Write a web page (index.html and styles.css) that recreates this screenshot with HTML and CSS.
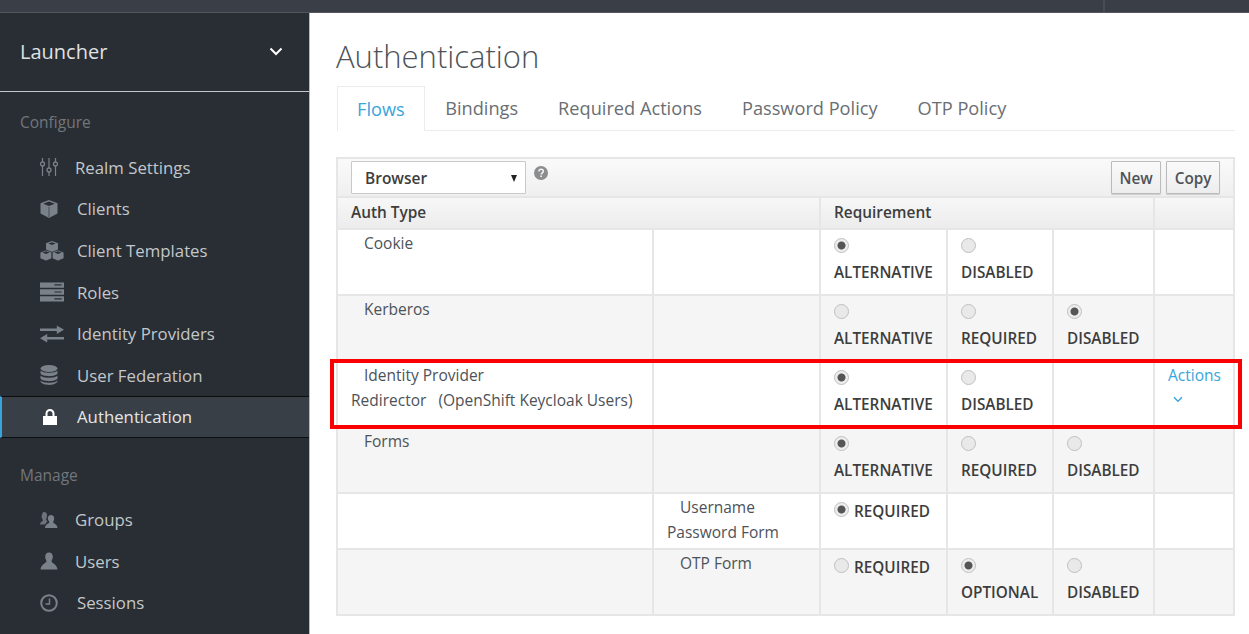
FILE: index.html
```html
<!DOCTYPE html>
<html lang="en">
<head>
    <meta charset="UTF-8">
    <title>Authentication</title>
    <link rel="stylesheet" href="styles.css">
</head>
<body>
<div id="topbar"><span class="divider"></span></div>
<div id="page">
    <div id="sidebar">
        <div id="realm">
            <span>Launcher</span>
            <svg width="14" height="9" viewBox="0 0 14 9"><path d="M1.5 1.5L7 7l5.5-5.5" fill="none" stroke="#fff" stroke-width="2"/></svg>
        </div>
        <h4 class="nav-title">Configure</h4>
        <ul class="nav-list">
            <li class="narrow">
                <svg class="icon" viewBox="0 0 18 18"><path d="M2.500 0v18M9 0v18M15.500 0v18" stroke="#7b8189" stroke-width="1.200" fill="none"/><circle cx="2.500" cy="6" r="2" fill="#292e34" stroke="#7b8189" stroke-width="1.300"/><circle cx="9" cy="12" r="2" fill="#292e34" stroke="#7b8189" stroke-width="1.300"/><circle cx="15.500" cy="6" r="2" fill="#292e34" stroke="#7b8189" stroke-width="1.300"/></svg>
                Realm Settings
            </li>
            <li>
                <svg class="icon" viewBox="0 0 18 18"><path d="M9 0l8.500 3.200v10.300L9 18 .500 13.500V3.200z" fill="#7b8189"/><path d="M9 1.600l5.700 2.200L9 6 3.300 3.800z" fill="#292e34"/><path d="M9 7v10" stroke="#292e34" stroke-width=".6"/></svg>
                Clients
            </li>
            <li>
                <svg class="icon wide" viewBox="0 0 24 20"><path d="M12 0l6 2.300v6.500l-6 2.700-6-2.700V2.300z" fill="#7b8189"/><path d="M6 9l6 2.300v6.200L6 20l-6-2.500v-6.200zM18 9l6 2.300v6.200L18 20l-6-2.500v-6.200z" fill="#7b8189" stroke="#292e34" stroke-width=".8"/><path d="M12 1.300l3.500 1.300L12 4 8.500 2.600zM6 10.300l3.500 1.300L6 13l-3.500-1.400zM18 10.300l3.500 1.300L18 13l-3.500-1.400z" fill="#292e34"/></svg>
                Client Templates
            </li>
            <li>
                <svg class="icon wide" viewBox="0 0 20 16"><path d="M0 0h20v4.500H0zM0 5.700h20v4.500H0zM0 11.500h20V16H0z" fill="#7b8189"/><path d="M12 2h6M12 8h6M12 13.700h6" stroke="#292e34"/></svg>
                Roles
            </li>
            <li>
                <svg class="icon wide" viewBox="0 0 20 14"><path d="M0 2.500h14V0l6 3.500-6 3.500V4.500H0zM20 9.500H6V7l-6 3.500L6 14v-2.500h14z" fill="#7b8189"/></svg>
                Identity Providers
            </li>
            <li>
                <svg class="icon tall" viewBox="0 0 18 20"><ellipse cx="9" cy="3.500" rx="8.500" ry="3.500" fill="#7b8189"/><path d="M.500 5.500c2 3 15 3 17 0v3c-2 3.500-15 3.500-17 0zM.500 10.500c2 3 15 3 17 0v3c-2 3.500-15 3.500-17 0zM.500 15.500c2 3 15 3 17 0v1c-2 4.500-15 4.500-17 0z" fill="#7b8189"/></svg>
                User Federation
            </li>
            <li class="active">
                <svg class="icon lock" viewBox="0 0 14 16"><path d="M0 7h14v9H0zM2.500 7V4.500a4.500 4.500 0 0 1 9 0V7H9.500V4.500a2.500 2.500 0 0 0-5 0V7z" fill="#fff"/></svg>
                Authentication
            </li>
        </ul>
        <h4 class="nav-title manage">Manage</h4>
        <ul class="nav-list">
            <li class="narrow">
                <svg class="icon" viewBox="0 0 18 16"><path d="M4 0a3 3 0 0 1 3 3.500c0 2-1 3.500-1 4.500l1.500 1L5 12.500H0c0-2.500 3-3.500 3-4.500-1-1-2-3-1-5.500C2.300 1 3 0 4 0z" fill="#6d737b"/><path d="M11 3a3.200 3.200 0 0 1 3.200 3.500c0 1.700-1 2.700-1 3.800 0 1.200 4.300 2 4.300 5.700H5c0-3.700 4.300-4.500 4.300-5.700 0-1.100-1.500-2.100-1.500-3.800A3.200 3.200 0 0 1 11 3z" fill="#7b8189"/></svg>
                Groups
            </li>
            <li class="narrow">
                <svg class="icon" viewBox="0 0 18 17"><path d="M9 0c2.500 0 3.800 2 3.800 4.200 0 2-1 3.300-1.300 4.600 0 1.500 5.500 3 6 8.200H.500c.500-5.200 6-6.700 6-8.200C6.200 7.500 5.200 6.200 5.200 4.200 5.200 2 6.500 0 9 0z" fill="#7b8189"/></svg>
                Users
            </li>
            <li>
                <svg class="icon" viewBox="0 0 18 18"><circle cx="9" cy="9" r="7.800" fill="none" stroke="#7b8189" stroke-width="2"/><path d="M9.500 4.500V10H5.500" fill="none" stroke="#7b8189" stroke-width="1.500"/></svg>
                Sessions
            </li>
        </ul>
    </div>

    <div id="content">
        <h1>Authentication</h1>
        <ul id="tabs">
            <li class="tab-selected">Flows</li>
            <li>Bindings</li>
            <li>Required Actions</li>
            <li>Password Policy</li>
            <li>OTP Policy</li>
        </ul>

        <table id="flows">
            <colgroup>
                <col class="c1"><col class="c2"><col class="c3"><col class="c4"><col class="c5"><col class="c6">
            </colgroup>
            <thead>
                <tr class="toolbar">
                    <th colspan="6">
                        <div class="toolbar-row">
                            <div class="select">Browser<span class="caret"></span></div>
                            <svg class="help" width="14" height="14" viewBox="0 0 14 14"><circle cx="7" cy="7" r="7" fill="#8b8d8f"/><path d="M4.800 5.300c.200-1.300 1.100-2 2.300-2 1.300 0 2.200.800 2.200 1.900 0 1.700-2 1.700-2 3.200" fill="none" stroke="#f5f5f5" stroke-width="1.500"/><path d="M6.300 9.400h1.600V11H6.300z" fill="#f5f5f5"/></svg>
                            <button class="btn push">New</button>
                            <button class="btn">Copy</button>
                        </div>
                    </th>
                </tr>
                <tr class="head">
                    <th colspan="2">Auth Type</th>
                    <th colspan="3">Requirement</th>
                    <th></th>
                </tr>
            </thead>
            <tbody>
                <tr class="r66">
                    <td class="name">Cookie</td>
                    <td></td>
                    <td><label class="opt"><input type="radio" checked>ALTERNATIVE</label></td>
                    <td><label class="opt"><input type="radio">DISABLED</label></td>
                    <td></td>
                    <td></td>
                </tr>
                <tr class="r66 odd">
                    <td class="name">Kerberos</td>
                    <td></td>
                    <td><label class="opt"><input type="radio">ALTERNATIVE</label></td>
                    <td><label class="opt"><input type="radio">REQUIRED</label></td>
                    <td><label class="opt"><input type="radio" checked>DISABLED</label></td>
                    <td></td>
                </tr>
                <tr class="r66">
                    <td class="name">Identity Provider <span class="nowrap">Redirector&nbsp;&nbsp;&nbsp;(OpenShift Keycloak Users)</span></td>
                    <td></td>
                    <td><label class="opt"><input type="radio" checked>ALTERNATIVE</label></td>
                    <td><label class="opt"><input type="radio">DISABLED</label></td>
                    <td></td>
                    <td class="actions">Actions<br><svg width="10" height="7" viewBox="0 0 10 7"><path d="M1 1.200l4 4 4-4" fill="none" stroke="#39a5dc" stroke-width="1.400"/></svg></td>
                </tr>
                <tr class="r66 odd">
                    <td class="name">Forms</td>
                    <td></td>
                    <td><label class="opt"><input type="radio" checked>ALTERNATIVE</label></td>
                    <td><label class="opt"><input type="radio">REQUIRED</label></td>
                    <td><label class="opt"><input type="radio">DISABLED</label></td>
                    <td></td>
                </tr>
                <tr class="r56">
                    <td></td>
                    <td class="name">Username Password Form</td>
                    <td><label class="opt inline"><input type="radio" checked>REQUIRED</label></td>
                    <td></td>
                    <td></td>
                    <td></td>
                </tr>
                <tr class="r66 odd">
                    <td></td>
                    <td class="name">OTP Form</td>
                    <td><label class="opt inline"><input type="radio">REQUIRED</label></td>
                    <td><label class="opt"><input type="radio" checked>OPTIONAL</label></td>
                    <td><label class="opt"><input type="radio">DISABLED</label></td>
                    <td></td>
                </tr>
            </tbody>
        </table>
        <div id="highlight"></div>
    </div>
</div>
</body>
</html>
```

FILE: styles.css
```css
*{
    margin: 0;
    padding: 0;
    box-sizing: border-box;
}
li{
    list-style: none;
}
html,body{
    height: 634px;
    overflow: hidden;
}
body{
    font-family: "Open Sans", "Liberation Sans", sans-serif;
    font-size: 16.8px;
    line-height: 25px;
    color: #363636;
    background-color: #ffffff;
}
#topbar{
    height: 13px;
    padding-left: 1103px;
    background-color: #3a3f47;
    border-bottom: 1px solid #53575d;
}
.divider{
    display: block;
    width: 2px;
    height: 12px;
    background-color: #474b52;
}
#page{
    display: flex;
    height: 621px;
}
#sidebar{
    width: 310px;
    flex: none;
    background-color: #292e34;
    border-right: 1px solid #b9b9b9;
}
#realm{
    display: flex;
    align-items: center;
    justify-content: space-between;
    height: 79px;
    padding: 0 26px 2px 20px;
    font-size: 20px;
    color: #dfe1e3;
    border-bottom: 1px solid #c4c6c8;
}
.nav-title{
    padding: 18px 0 0 20px;
    height: 54.600px;
    font-size: 15.5px;
    font-weight: 400;
    color: #72767b;
}
.nav-title.manage{
    padding-top: 25px;
    height: 61px;
}
.nav-list{
    color: #c3c7cb;
}
.nav-list li{
    display: flex;
    align-items: center;
    height: 41.6px;
    padding-left: 40px;
}
.nav-list .icon{
    width: 18px;
    height: 18px;
    margin-right: 19px;
    flex: none;
}
.nav-list .icon.wide{
    width: 24px;
    height: 20px;
    margin-right: 13px;
}
.nav-list .icon.tall{
    height: 20px;
}
.nav-list .icon.lock{
    width: 14px;
    height: 16px;
    margin: 0 20px 0 3px;
}
.nav-list .narrow .icon{
    margin-right: 17px;
}
.nav-list .active{
    padding-left: 38px;
    color: #e4e6e8;
    background-color: #393f46;
    border-left: 2px solid #39a5dc;
    border-top: 1px solid #0c0e10;
    border-bottom: 1px solid #0c0e10;
}
#content{
    position: relative;
    flex: 1;
    padding: 0 14px 0 26px;
}
h1{
    height: 73px;
    padding-top: 22px;
    font-size: 31px;
    line-height: 42px;
    font-weight: 300;
    color: #4d5258;
}
#tabs{
    display: flex;
    height: 45px;
    margin-left: 1px;
    border-bottom: 1px solid #ececec;
    font-size: 18.200px;
    color: #6a6e73;
}
#tabs li{
    padding: 10px 20px 0;
}
#tabs .tab-selected{
    height: 45px;
    padding: 10px 19px 0 19px;
    margin-right: 0.500px;
    color: #39a5dc;
    background-color: #ffffff;
    border: 1px solid #ececec;
    border-bottom: 0;
}
#flows{
    width: 897px;
    margin-top: 26px;
    table-layout: fixed;
    border-collapse: collapse;
    font-size: 15.5px;
}
.c1{ width: 316px; }
.c2{ width: 167px; }
.c3{ width: 127px; }
.c4{ width: 106px; }
.c5{ width: 101px; }
.c6{ width: 80px; }
#flows th,#flows td{
    border: 2px solid #e6e6e6;
    padding: 0 13px;
    vertical-align: top;
    text-align: left;
}
.toolbar th{
    height: 39px;
    background: linear-gradient(#fafafa, #efefef);
}
.toolbar-row{
    display: flex;
    align-items: flex-start;
    padding-top: 2px;
}
.select{
    position: relative;
    width: 175px;
    height: 33px;
    padding-left: 13px;
    line-height: 32px;
    background-color: #ffffff;
    border: 1px solid #c9c9c9;
    border-radius: 1px;
    font-weight: 600;
    color: #3d3d3d;
}
.caret{
    position: absolute;
    right: 8px;
    top: 13px;
    border-left: 3.500px solid transparent;
    border-right: 3.500px solid transparent;
    border-top: 7px solid #222222;
}
.help{
    margin: 5px 0 0 8px;
}
.btn{
    height: 33px;
    padding: 0 7.500px;
    margin-left: 5px;
    font: 600 15.300px "Open Sans", sans-serif;
    color: #4d5258;
    background: linear-gradient(#fafafa, #ededed);
    border: 1px solid #bbbbbb;
    border-radius: 1px;
    box-shadow: 0 1px 1px rgba(0,0,0,.15);
}
.push{
    margin-left: auto;
}
.head th{
    height: 32px;
    padding-top: 2px !important;
    font-size: 15.400px;
    font-weight: 600;
    color: #3d3d3d;
    background: linear-gradient(#f7f7f7, #ececec);
}
.r66 td{
    height: 66px;
}
.r56 td{
    height: 56px;
}
.odd td{
    background-color: #f5f5f5;
}
.name{
    padding-top: 1px !important;
    text-indent: 13px;
    color: #4d5258;
}
.nowrap{
    white-space: nowrap;
}
.opt{
    display: block;
    padding-top: 8px;
    font-size: 15.300px;
    font-weight: 600;
    color: #3d3d3d;
}
.opt input{
    display: block;
    appearance: none;
    width: 15px;
    height: 15px;
    margin-bottom: 7px;
    border: 1.500px solid #c0c0c0;
    border-radius: 50%;
    background-color: #e9e9e9;
}
.opt input:checked{
    background: radial-gradient(circle, #555555 0 3.500px, #ededed 4.500px);
}
.opt.inline{
    display: flex;
    align-items: flex-start;
    padding-top: 5px;
}
.opt.inline input{
    margin: 3px 5px 0 0;
}
.actions{
    padding-top: 1px !important;
    color: #39a5dc;
}
.actions svg{
    margin-left: 5px;
    vertical-align: 3px;
}
#highlight{
    position: absolute;
    left: 20px;
    top: 346px;
    width: 912px;
    height: 70px;
    border: 4px solid #fa0000;
}
```
